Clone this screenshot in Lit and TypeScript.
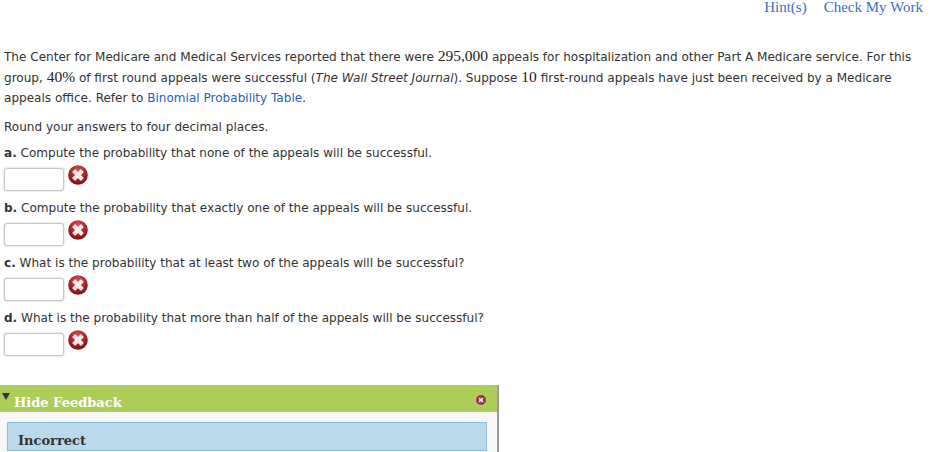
import { LitElement, html, css } from "lit";
import { customElement } from "lit/decorators.js";

const QUESTIONS = [
  ["a.", "Compute the probability that none of the appeals will be successful."],
  ["b.", "Compute the probability that exactly one of the appeals will be successful."],
  ["c.", "What is the probability that at least two of the appeals will be successful?"],
  ["d.", "What is the probability that more than half of the appeals will be successful?"],
];

@customElement("app-root")
export class AppRoot extends LitElement {
  private _wrongIcon() {
    return html`<svg class="wrong" viewBox="0 0 20 20" width="20" height="20">
      <defs>
        <radialGradient id="ball" cx="50%" cy="30%" r="75%">
          <stop offset="0" stop-color="#d65a5e"></stop>
          <stop offset="0.6" stop-color="#a81c22"></stop>
          <stop offset="1" stop-color="#6e0e12"></stop>
        </radialGradient>
      </defs>
      <circle cx="10" cy="10" r="9.8" fill="url(#ball)"></circle>
      <path d="M5.6 5.6l8.8 8.8M14.4 5.6l-8.8 8.8" stroke="#f1ecea" stroke-width="4.2" stroke-linecap="butt"></path>
    </svg>`;
  }

  protected render() {
    return html`
      <nav class="links">
        <a>Hint(s)</a>
        <a>Check My Work</a>
      </nav>
      <main class="question">
        <p class="intro">
          The Center for Medicare and Medical Services reported that there were
          <span class="math">295,000</span> appeals for hospitalization and other Part A Medicare
          service. For this group, <span class="math">40%</span> of first round appeals were
          successful (<em>The Wall Street Journal</em>). Suppose <span class="math">10</span>
          first-round appeals have just been received by a Medicare appeals office. Refer to
          <a>Binomial Probability Table</a>.
        </p>
        <p class="round">Round your answers to four decimal places.</p>
        ${QUESTIONS.map(
          ([label, text]) => html`
            <section class="part">
              <p><b>${label}</b> ${text}</p>
              <div class="answer">
                <div class="input"></div>
                ${this._wrongIcon()}
              </div>
            </section>
          `
        )}
      </main>
      <section class="feedback">
        <header>
          <span class="arrow"></span>
          <span class="title">Hide Feedback</span>
          <svg class="close" viewBox="0 0 10 10" width="10" height="10">
            <circle cx="5" cy="5" r="5" fill="#a9304f"></circle>
            <path d="M3.2 3.2l3.6 3.6M6.8 3.2l-3.6 3.6" stroke="#fff" stroke-width="1.6"></path>
          </svg>
        </header>
        <div class="body">
          <div class="result">Incorrect</div>
        </div>
      </section>
    `;
  }

  static styles = css`
    :host {
      display: block;
      height: 452px;
      overflow: hidden;
      background: #fff;
      color: #333;
      font-family: "DejaVu Sans", Verdana, sans-serif;
      font-size: 12.05px;
    }
    p {
      margin: 0;
    }
    a {
      color: #1f5fbf;
    }
    .links {
      display: flex;
      justify-content: flex-end;
      gap: 17px;
      padding-right: 11px;
      height: 47px;
      font-family: "Liberation Serif", Georgia, serif;
      font-size: 15px;
      line-height: 14px;
    }
    .links a {
      color: #3a6fc4;
    }
    .question {
      padding-left: 4px;
    }
    .intro {
      width: 912px;
      line-height: 20.5px;
    }
    .math {
      font-family: "Liberation Serif", serif;
      font-size: 15.5px;
      line-height: 1;
      color: #222;
    }
    .round {
      margin-top: 9px;
      line-height: 18px;
    }
    .part {
      margin-top: 7px;
      height: 48px;
    }
    .round + .part {
      margin-top: 8px;
    }
    .part p {
      line-height: 18px;
    }
    .answer {
      display: flex;
      align-items: flex-start;
      gap: 4px;
      margin-top: 6px;
    }
    .input {
      width: 58px;
      height: 21px;
      background: #fff;
      border: 1px solid #c8c8c8;
      border-radius: 3px;
      box-shadow: 0 0 2px #bbb;
    }
    .wrong {
      margin-top: -3px;
    }
    .feedback {
      margin-top: 28px;
      width: 497px;
      box-shadow: 2px 0 0 #999;
      background: #f8f8f8;
      height: 70px;
    }
    header {
      display: flex;
      align-items: center;
      position: relative;
      height: 27px;
      background: #accd5a;
      padding-left: 14px;
      padding-right: 11px;
      font-family: "DejaVu Serif", Georgia, serif;
      font-weight: bold;
      font-size: 13px;
      color: #fff;
    }
    .arrow {
      position: absolute;
      left: 2px;
      top: 8px;
      border-left: 4px solid transparent;
      border-right: 4px solid transparent;
      border-top: 7px solid #333;
    }
    .title {
      flex: 1;
      padding-top: 9px;
    }
    .close {
      margin-top: 3px;
    }
    .body {
      padding: 10px 10px 0 7px;
    }
    .result {
      height: 29px;
      box-sizing: border-box;
      padding: 10px 0 0 10px;
      background: #bad9eb;
      border: 1px solid #8bbfdf;
      font-family: "DejaVu Serif", Georgia, serif;
      font-weight: bold;
      font-size: 13px;
      line-height: 15px;
      color: #333;
    }
  `;
}
